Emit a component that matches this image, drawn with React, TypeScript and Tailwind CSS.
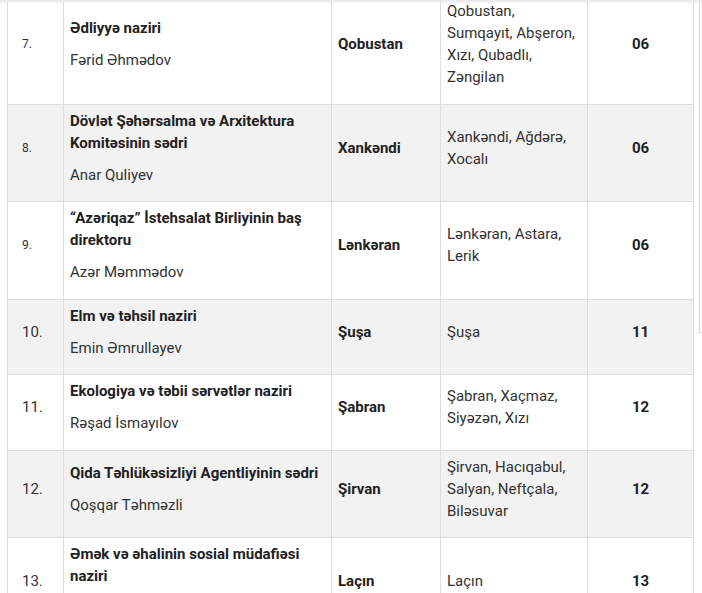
import React from 'react'

type Row = {
  no: string
  title: string[]
  name: string
  city: string
  regions: string[]
  count: string
  small?: boolean
}

const rows: Row[] = [
  {
    no: '7.',
    title: ['Ədliyyə naziri'],
    name: 'Fərid Əhmədov',
    city: 'Qobustan',
    regions: ['Qobustan,', 'Sumqayıt, Abşeron,', 'Xızı, Qubadlı,', 'Zəngilan'],
    count: '06',
    small: true,
  },
  {
    no: '8.',
    title: ['Dövlət Şəhərsalma və Arxitektura', 'Komitəsinin sədri'],
    name: 'Anar Quliyev',
    city: 'Xankəndi',
    regions: ['Xankəndi, Ağdərə,', 'Xocalı'],
    count: '06',
    small: true,
  },
  {
    no: '9.',
    title: ['“Azəriqaz” İstehsalat Birliyinin baş', 'direktoru'],
    name: 'Azər Məmmədov',
    city: 'Lənkəran',
    regions: ['Lənkəran, Astara,', 'Lerik'],
    count: '06',
    small: true,
  },
  {
    no: '10.',
    title: ['Elm və təhsil naziri'],
    name: 'Emin Əmrullayev',
    city: 'Şuşa',
    regions: ['Şuşa'],
    count: '11',
  },
  {
    no: '11.',
    title: ['Ekologiya və təbii sərvətlər naziri'],
    name: 'Rəşad İsmayılov',
    city: 'Şabran',
    regions: ['Şabran, Xaçmaz,', 'Siyəzən, Xızı'],
    count: '12',
  },
  {
    no: '12.',
    title: ['Qida Təhlükəsizliyi Agentliyinin sədri'],
    name: 'Qoşqar Təhməzli',
    city: 'Şirvan',
    regions: ['Şirvan, Hacıqabul,', 'Salyan, Neftçala,', 'Biləsuvar'],
    count: '12',
  },
  {
    // name line falls below the visible area
    no: '13.',
    title: ['Əmək və əhalinin sosial müdafiəsi', 'naziri'],
    name: '',
    city: 'Laçın',
    regions: ['Laçın'],
    count: '13',
  },
]

function Lines({ items }: { items: string[] }) {
  return (
    <>
      {items.map((t, i) => (
        <React.Fragment key={i}>
          {i > 0 && <br />}
          {t}
        </React.Fragment>
      ))}
    </>
  )
}

const cell = 'border border-[#dedede] px-[6px] pt-[5px] pb-[5.5px] align-middle'

export default function App() {
  return (
    <div
      className="relative h-[593px] w-[702px] overflow-hidden bg-white"
      style={{ fontFamily: 'Roboto, "Liberation Sans", sans-serif' }}
    >
      <div className="absolute left-0 right-0 top-0 h-[4px] bg-gradient-to-b from-[#e6e6e6] to-transparent" />
      <div className="flex items-start pl-[7px]">
        <table className="mt-[-6px] w-[686px] table-fixed border-collapse text-[15px] leading-[22px] text-[#222]">
          <colgroup>
            <col className="w-[56px]" />
            <col className="w-[268px]" />
            <col className="w-[109px]" />
            <col className="w-[147px]" />
            <col className="w-[106px]" />
          </colgroup>
          <tbody>
            {rows.map((r, i) => (
              <tr key={r.no} className={i % 2 === 1 ? 'bg-[#f2f2f2]' : 'bg-white'}>
                <td className={`${cell} pl-[14px]`}>
                  <p className={r.small ? 'mb-[10px] text-[12px] text-[#333]' : 'mb-[10px] text-[#333]'}>
                    {r.no}
                  </p>
                </td>
                <td className={cell}>
                  <p className="mb-[10px] font-bold">
                    <Lines items={r.title} />
                  </p>
                  {r.name ? (
                    <p className="mb-[10px] text-[#333]">{r.name}</p>
                  ) : (
                    <div className="mb-[10px] h-[22px]" />
                  )}
                </td>
                <td className={cell}>
                  <p className="mb-[10px] font-bold">{r.city}</p>
                </td>
                <td className={cell}>
                  <p className="mb-[10px] text-[#333]">
                    <Lines items={r.regions} />
                  </p>
                </td>
                <td className={`${cell} text-center`}>
                  <p className="mb-[10px] font-bold">{r.count}</p>
                </td>
              </tr>
            ))}
          </tbody>
        </table>
        <div className="ml-[5px] h-[333px] flex-1 border-b border-l border-[#d3d8e0]" />
      </div>
    </div>
  )
}
